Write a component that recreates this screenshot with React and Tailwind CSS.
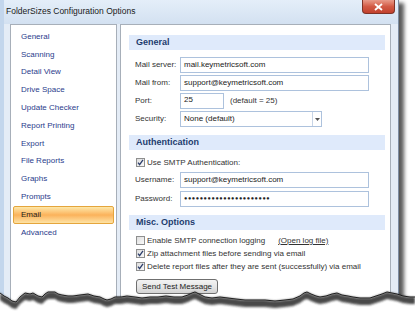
import React from "react";

const navItems = [
  "General",
  "Scanning",
  "Detail View",
  "Drive Space",
  "Update Checker",
  "Report Printing",
  "Export",
  "File Reports",
  "Graphs",
  "Prompts",
  "Email",
  "Advanced",
];

// torn paper edge along the bottom of the window
const tear = [
  [0, 293], [4, 296], [8, 298], [12, 301], [16, 302], [20, 297], [25, 293], [30, 294],
  [33, 293], [38, 296], [42, 297], [45, 294], [48, 292], [55, 292], [58, 294], [62, 295],
  [68, 296], [73, 296], [80, 295], [88, 294], [94, 296], [100, 297], [104, 299], [107, 300],
  [111, 299], [115, 297], [121, 297], [127, 296], [135, 297], [142, 298], [150, 297],
  [158, 297], [166, 296], [174, 297], [182, 297], [188, 295], [192, 293], [195, 292],
  [199, 294], [205, 297], [212, 298], [220, 297], [228, 298], [236, 299], [245, 300],
  [255, 300], [265, 300], [275, 301], [285, 300], [293, 299], [300, 296], [304, 293],
  [307, 292], [311, 294], [316, 296], [320, 297], [326, 296], [332, 294], [337, 293],
  [342, 295], [348, 296], [353, 297], [360, 298], [366, 298], [370, 298], [376, 296],
  [382, 294], [387, 292], [392, 293], [397, 294], [403, 296], [410, 297], [415, 297],
];

const line = (dy) => tear.map(([x, y]) => `${x},${y + dy}`).join(" L");

const CheckBox = ({ checked }) => (
  <svg width="9" height="9" viewBox="0 0 9 9" className="shrink-0">
    <defs>
      <linearGradient id="cbg" x1="0" y1="0" x2="1" y2="1">
        <stop offset="0" stopColor="#dcdcdc" />
        <stop offset="1" stopColor="#fbfbfb" />
      </linearGradient>
    </defs>
    <rect x="0.5" y="0.5" width="8" height="8" fill="url(#cbg)" stroke="#8e8f8f" />
    {checked && (
      <path d="M2 4.6 L3.6 6.6 L7 1.8" fill="none" stroke="#2c3e6b" strokeWidth="1.3" />
    )}
  </svg>
);

const SectionHeader = ({ children }) => (
  <div className="h-[15px] bg-[#dfeafb] flex items-center pl-[7px] text-[9px] font-bold text-[#1d3c6e]">
    {children}
  </div>
);

const Field = ({ label, children }) => (
  <div className="flex items-center h-[16px]">
    <div className="w-[51px] pl-[6px] text-[#333] whitespace-nowrap">{label}</div>
    {children}
  </div>
);

const Input = ({ value, w = "w-[189px]", cls = "" }) => (
  <div
    className={`${w} h-[16px] border border-[#adc2dd] bg-white flex items-center pl-[3px] text-[#222] whitespace-nowrap ${cls}`}
  >
    {value}
  </div>
);

export default function App() {
  return (
    <div className="w-[415px] h-[321px] bg-white relative overflow-hidden font-['Liberation_Sans',Arial,sans-serif] text-[8px] leading-none">
      <div className="w-[399px] h-[312px] flex flex-col bg-[#e4ecf6] border-l-[4px] border-l-[#c3d6ec] border-r border-r-[#7d8da3] shadow-[5px_3px_4px_rgba(0,0,0,0.65)]">
        {/* title bar */}
        <div className="h-[24px] shrink-0 flex items-start justify-between bg-gradient-to-b from-[#e4eef9] to-[#d3e1f1]">
          <div className="pl-[2px] pt-[7px] text-[8.5px] text-[#1a1a1a] whitespace-nowrap">
            FolderSizes Configuration Options
          </div>
          <div className="w-[33px] h-[14px] mr-[3px] rounded-b-[4px] border border-t-0 border-[#7e3327] bg-gradient-to-b from-[#e89a8a] via-[#d25a45] to-[#c2412d] flex items-center justify-center">
            <svg width="9" height="8" viewBox="0 0 9 8">
              <path d="M1 1 L8 7 M8 1 L1 7" stroke="#fff" strokeWidth="1.8" />
            </svg>
          </div>
        </div>

        {/* body */}
        <div className="flex flex-1 pl-[6px] pr-[7px] gap-[3px]">
          <div className="w-[107px] bg-white border border-[#a7afb9] pt-[3px] px-[2px]">
            {navItems.map((item) =>
              item === "Email" ? (
                <div
                  key={item}
                  className="h-[17.8px] flex items-center pl-[7px] text-[#1c1c1c] border border-[#e5a53c] rounded-[2px] bg-gradient-to-b from-[#fde8a8] via-[#fbb25a] to-[#fde3a4]"
                >
                  {item}
                </div>
              ) : (
                <div key={item} className="h-[17.8px] flex items-center pl-[8px] text-[#2a3c8c]">
                  {item}
                </div>
              )
            )}
          </div>

          <div className="flex-1 bg-white border border-[#a7afb9] pt-[10px] pl-[8px] pr-[5px]">
            <SectionHeader>General</SectionHeader>
            <div className="flex flex-col gap-[2px] mt-[7px]">
              <Field label="Mail server:">
                <Input value="mail.keymetricsoft.com" />
              </Field>
              <Field label="Mail from:">
                <Input value="support@keymetricsoft.com" />
              </Field>
              <Field label="Port:">
                <Input value="25" w="w-[44px]" cls="items-start pt-[2px]" />
                <span className="ml-[6px] text-[#333]">(default = 25)</span>
              </Field>
              <Field label="Security:">
                <div className="w-[142px] h-[16px] border border-[#adc2dd] bg-white flex items-center">
                  <span className="flex-1 pl-[3px] text-[#222]">None (default)</span>
                  <div className="w-[9px] h-full border-l border-[#c7d4e6] flex items-center justify-center">
                    <svg width="5" height="3" viewBox="0 0 5 3">
                      <path d="M0 0 H5 L2.5 3 Z" fill="#555" />
                    </svg>
                  </div>
                </div>
              </Field>
            </div>

            <div className="mt-[8px]">
              <SectionHeader>Authentication</SectionHeader>
            </div>
            <div className="flex items-center gap-[2px] pl-[7px] mt-[8px] text-[#333]">
              <CheckBox checked />
              <span>Use SMTP Authentication:</span>
            </div>
            <div className="flex flex-col gap-[3px] mt-[5px]">
              <Field label="Username:">
                <Input value="support@keymetricsoft.com" />
              </Field>
              <Field label="Password:">
                <Input
                  value={"\u25CF".repeat(22)}
                  cls="text-[5.5px] tracking-[0.6px] text-[#111]"
                />
              </Field>
            </div>

            <div className="mt-[8px]">
              <SectionHeader>Misc. Options</SectionHeader>
            </div>
            <div className="flex flex-col gap-[4px] pl-[7px] mt-[6px] text-[#333]">
              <div className="flex items-center gap-[2px] h-[9px] whitespace-nowrap">
                <CheckBox />
                <span>Enable SMTP connection logging</span>
                <span className="ml-[11px] underline text-[#333]">(Open log file)</span>
              </div>
              <div className="flex items-center gap-[2px] h-[9px] whitespace-nowrap">
                <CheckBox checked />
                <span>Zip attachment files before sending via email</span>
              </div>
              <div className="flex items-center gap-[2px] h-[9px] whitespace-nowrap">
                <CheckBox checked />
                <span>Delete report files after they are sent (successfully) via email</span>
              </div>
            </div>
            <div className="mt-[8px] ml-[7px] w-[82px] h-[15px] rounded-[3px] border border-[#6f6f6f] bg-gradient-to-b from-[#f3f3f3] via-[#e6e6e6] to-[#d3d3d3] flex items-center justify-center text-[#222] whitespace-nowrap">
              Send Test Message
            </div>
          </div>
        </div>
      </div>

      {/* torn edge */}
      <svg
        width="415"
        height="321"
        viewBox="0 0 415 321"
        className="absolute left-0 top-0 pointer-events-none"
      >
        <defs>
          <filter id="tb" x="-5%" y="-50%" width="110%" height="200%">
            <feGaussianBlur stdDeviation="1.3" />
          </filter>
        </defs>
        <path d={`M${line(0)} L415,321 L0,321 Z`} fill="#fff" />
        <path
          d={`M${line(0)} L${[...tear].reverse().map(([x, y]) => `${x},${y + 7}`).join(" L")} Z`}
          fill="#2a2a2a"
          opacity="0.85"
          filter="url(#tb)"
        />
        <path d={`M${line(0)}`} fill="none" stroke="#111" strokeWidth="0.9" />
      </svg>
    </div>
  );
}
